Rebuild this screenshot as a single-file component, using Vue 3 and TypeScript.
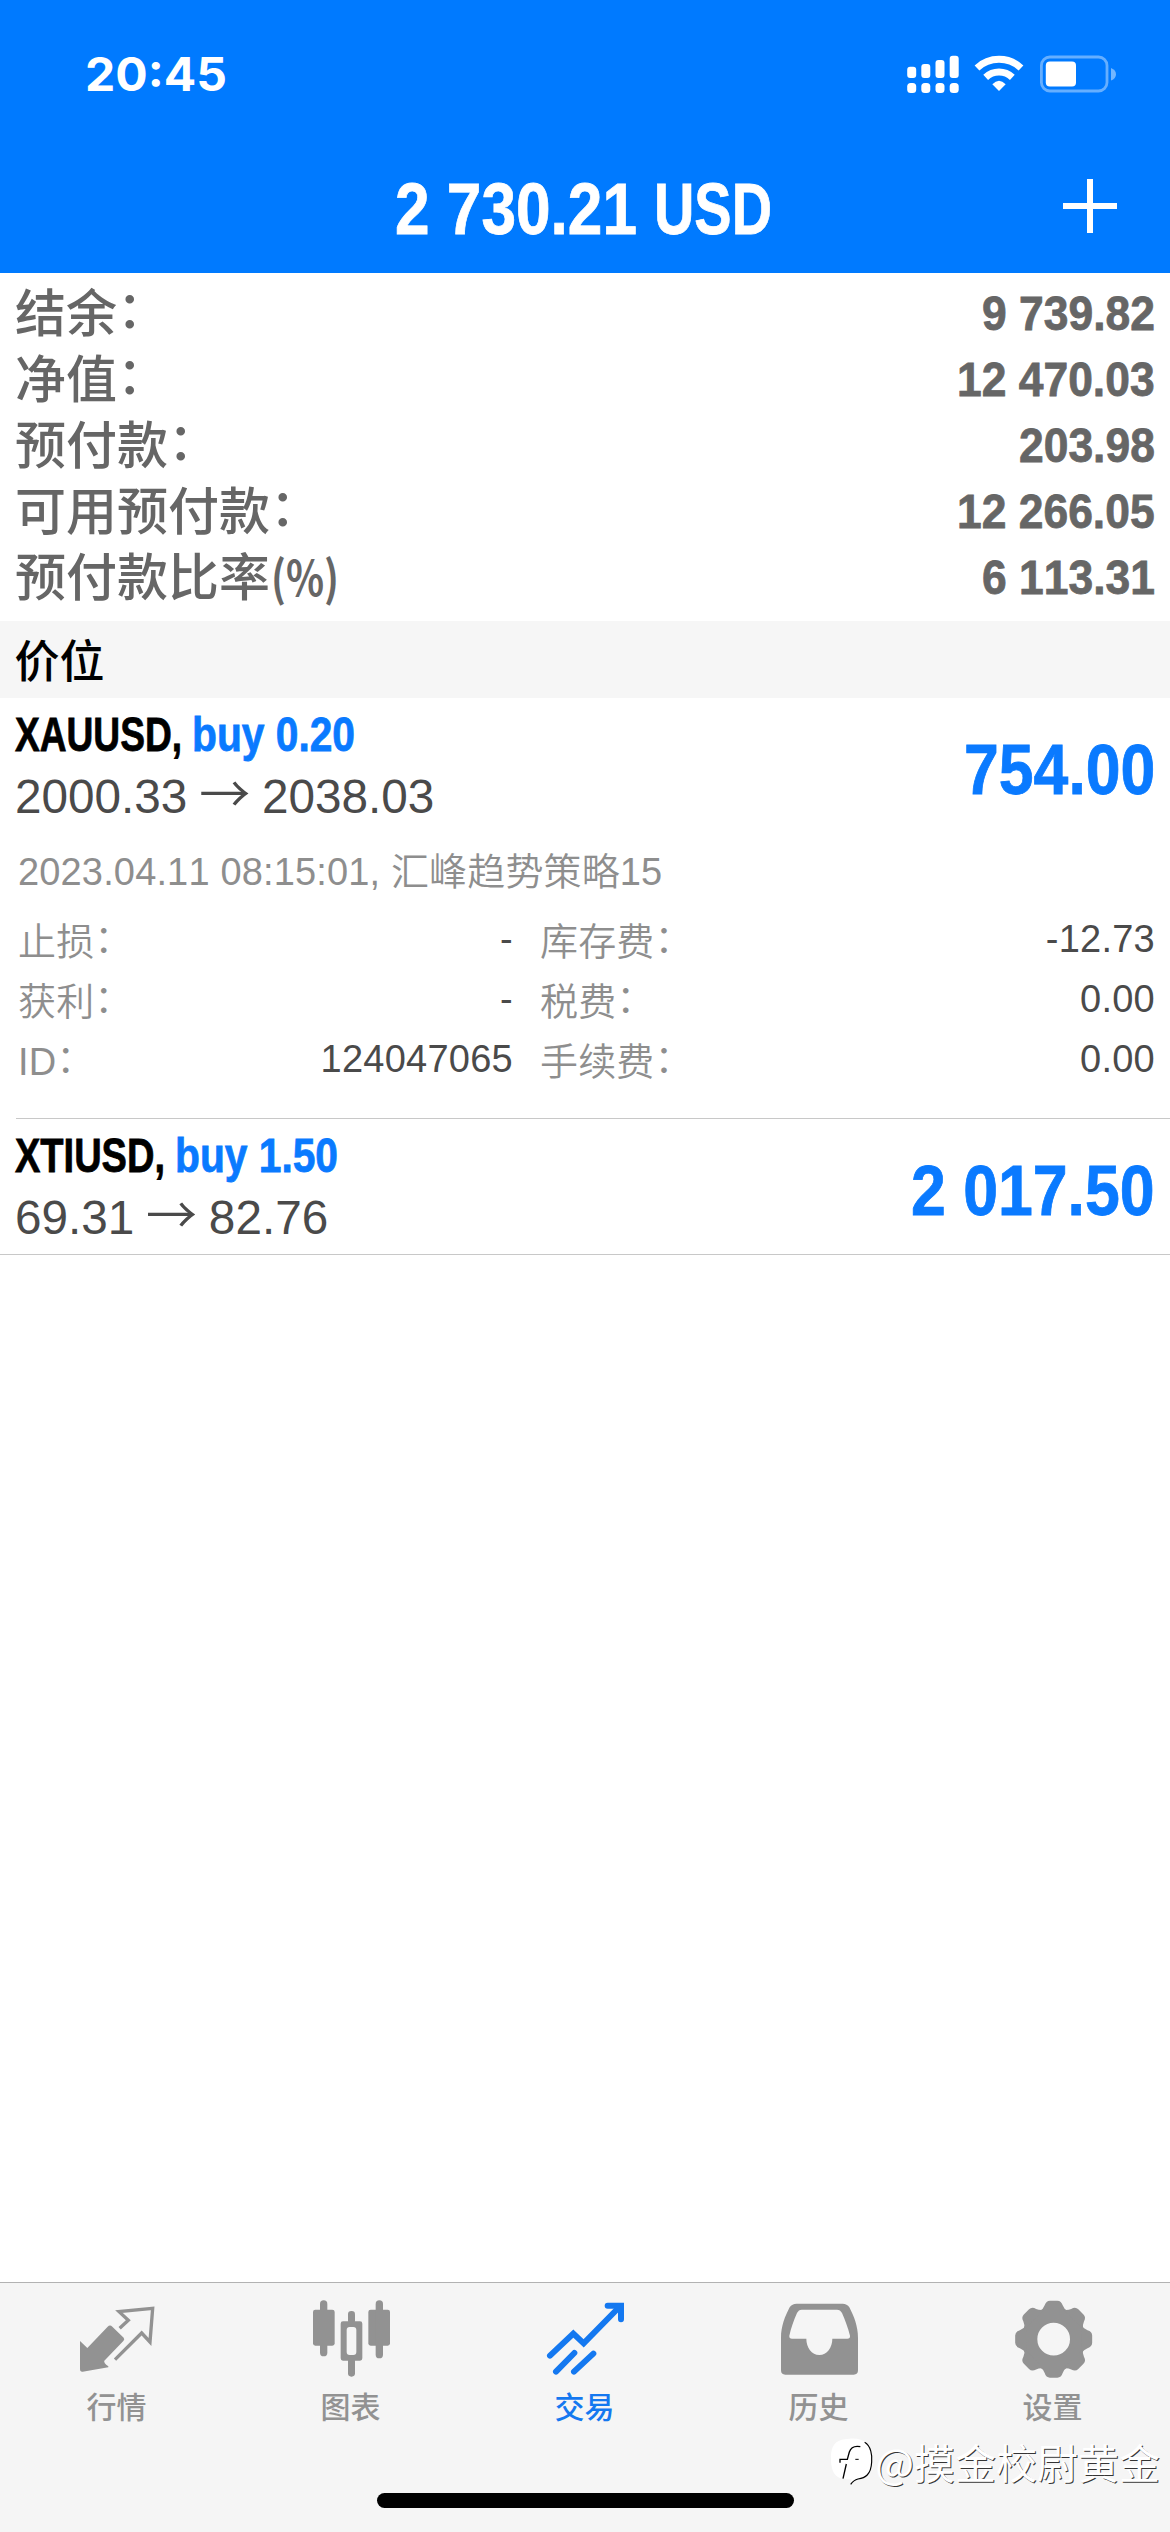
<script setup lang="ts">
import { h, type FunctionalComponent, type VNode } from 'vue'

interface FitProps {
  text: string
  width: number
  size: number
}

/* Squeezes the inner span horizontally until it takes the wanted advance width. */
const squeeze = (vnode: VNode): void => {
  const el = vnode.el as HTMLElement
  const target = Number(el.dataset.width)
  el.style.transform = `scaleX(${target / el.getBoundingClientRect().width})`
}

/* Single line of text set to an exact advance width (condensed numerals and tickers). */
const FitText: FunctionalComponent<FitProps> = (p) =>
  h('span', { class: 'fit', style: { width: `${p.width}px`, fontSize: `${p.size}px` } }, [
    h('span', { class: 'fit-line', 'data-width': p.width, onVnodeMounted: squeeze }, p.text),
  ])
FitText.props = ['text', 'width', 'size']

/* Digits share one advance; spaces and points take half of it. */
const numWidth = (text: string, digit: number): number =>
  [...text].reduce((sum, c) => sum + (/\d/.test(c) ? digit : digit / 2), 0)

const summary = [
  { label: '结余', colon: true, value: '9 739.82' },
  { label: '净值', colon: true, value: '12 470.03' },
  { label: '预付款', colon: true, value: '203.98' },
  { label: '可用预付款', colon: true, value: '12 266.05' },
  { label: '预付款比率', colon: false, value: '6 113.31' },
]

const details = [
  { left: '止损', leftValue: '-', right: '库存费', rightValue: '-12.73' },
  { left: '获利', leftValue: '-', right: '税费', rightValue: '0.00' },
  { left: 'ID', leftValue: '124047065', right: '手续费', rightValue: '0.00' },
]

const positions = [
  { symbol: 'XAUUSD,', symbolWidth: 167, side: 'buy 0.20', sideWidth: 163, open: '2000.33', now: '2038.03', profit: '754.00', expanded: true },
  { symbol: 'XTIUSD,', symbolWidth: 150, side: 'buy 1.50', sideWidth: 163, open: '69.31', now: '82.76', profit: '2 017.50', expanded: false },
]

const teeth = [0, 45, 90, 135, 180, 225, 270, 315]
</script>

<template>
  <div class="screen">
    <header class="header">
      <div class="status">
        <FitText class="time" text="20:45" :width="142" :size="46" />
        <div class="status-icons">
          <svg class="signal" width="52" height="38" viewBox="906.5 55 52 38" fill="#fff">
            <rect x="906.7" y="66.7" width="9" height="11.3" rx="3" />
            <rect x="920.8" y="64" width="9" height="14" rx="3" />
            <rect x="935" y="60" width="9" height="18" rx="3" />
            <rect x="949.2" y="55.7" width="9" height="22.3" rx="3" />
            <rect x="906.7" y="82.9" width="9" height="10" rx="3.5" />
            <rect x="920.8" y="82.9" width="9" height="10" rx="3.5" />
            <rect x="935" y="82.9" width="9" height="10" rx="3.5" />
            <rect x="949.2" y="82.9" width="9" height="10" rx="3.5" />
          </svg>
          <svg class="wifi" width="50" height="38" viewBox="282 45 150 114" fill="none" stroke="#fff" stroke-width="21">
            <path d="M291 84 A97 97 0 0 1 423 84" />
            <path d="M317 112 A59 59 0 0 1 397 112" />
            <path d="M357 153 L337 133 Q357 112 377 133 Z" fill="#fff" stroke="none" />
          </svg>
          <svg class="battery" width="78" height="38" viewBox="1039 55 78 38">
            <rect x="1041.4" y="57" width="65.6" height="34" rx="8.5" fill="none" stroke="#fff" stroke-opacity=".4" stroke-width="2.8" />
            <rect x="1045.8" y="61.6" width="30.2" height="24.8" rx="4" fill="#fff" />
            <path d="M1111 68 Q1116 70 1116 74.3 Q1116 78.600 1111 80.600 Z" fill="#fff" fill-opacity=".45" />
          </svg>
        </div>
      </div>
      <div class="navbar">
        <h1 class="title">
          <FitText text="2 730.21" :width="242" :size="71.5" />
          <FitText text="USD" :width="118" :size="71.5" />
        </h1>
        <svg class="plus" width="54" height="54" viewBox="0 0 54 54" stroke="#fff" stroke-width="6">
          <path d="M27 0 V54 M0 27 H54" />
        </svg>
      </div>
    </header>

    <section class="summary">
      <div v-for="row in summary" :key="row.label" class="summary-row">
        <span class="summary-label">{{ row.label }}<i v-if="row.colon" class="colon">：</i><FitText v-else class="unit" text="(%)" :width="68" :size="48" /></span>
        <FitText class="amount" :text="row.value" :width="numWidth(row.value, 24.7)" :size="49" />
      </div>
    </section>

    <div class="section-head">价位</div>

    <section class="positions">
      <article v-for="p in positions" :key="p.symbol" class="position">
        <div class="position-main">
          <div class="position-info">
            <div class="ticker">
              <FitText class="symbol" :text="p.symbol" :width="p.symbolWidth" :size="48" />
              <FitText class="side" :text="p.side" :width="p.sideWidth" :size="48" />
            </div>
            <div class="prices">{{ p.open }} <span class="arrow">→</span> {{ p.now }}</div>
          </div>
          <FitText class="profit" :text="p.profit" :width="numWidth(p.profit, 34.8)" :size="71" />
        </div>
        <div v-if="p.expanded" class="details">
          <div class="comment">2023.04.11 08:15:01, 汇峰趋势策略15</div>
          <div v-for="d in details" :key="d.left" class="detail-row">
            <span class="cell cell-left"><span>{{ d.left }}<i class="colon">：</i></span><b>{{ d.leftValue }}</b></span>
            <span class="cell cell-right"><span>{{ d.right }}<i class="colon">：</i></span><b>{{ d.rightValue }}</b></span>
          </div>
        </div>
      </article>
    </section>

    <nav class="tabbar">
      <div class="tabs">
        <div class="tab">
          <svg width="80" height="80" viewBox="231 88 240 240">
            <path d="M240 214 L262 235 L323 171 Q330 164 337 171 L371 204 Q375 209 370 214 L313 273 Q310 279 325 290 L325 293 L248 306 Q240 307 240 298 Z" fill="currentColor" />
            <path d="M359 176 L385 152 L357 126 L458 116 L450 217 L425 190 L345 270" fill="none" stroke="currentColor" stroke-width="10" />
          </svg>
          <span>行情</span>
        </div>
        <div class="tab">
          <svg width="80" height="80" viewBox="933 88 240 240" fill="currentColor">
            <rect x="939" y="120" width="65" height="108" rx="7" />
            <rect x="960" y="92" width="22" height="168" rx="11" />
            <rect x="1105" y="120" width="65" height="108" rx="7" />
            <rect x="1127" y="92" width="22" height="174" rx="11" />
            <rect x="1044" y="124" width="21" height="40" rx="10" />
            <rect x="1044" y="262" width="21" height="59" rx="10" />
            <path fill-rule="evenodd" d="M1029 155 H1080 Q1087 155 1087 162 V266 Q1087 273 1080 273 H1029 Q1022 273 1022 266 V162 Q1022 155 1029 155 Z M1049 172 Q1040 172 1040 181 V247 Q1040 256 1049 256 H1060 Q1069 256 1069 247 V181 Q1069 172 1060 172 Z" />
          </svg>
          <span>图表</span>
        </div>
        <div class="tab active">
          <svg width="80" height="80" viewBox="285 88 240 240" fill="none" stroke="currentColor" stroke-width="18" stroke-linecap="round">
            <path d="M300 258 L370 192 L401 221 L508 112" />
            <path d="M473 108 H513 V149" />
            <path d="M318 306 L373 250 M372 306 L430 252" />
          </svg>
          <span>交易</span>
        </div>
        <div class="tab">
          <svg width="80" height="80" viewBox="987 88 240 240" fill="currentColor">
            <path fill-rule="evenodd" d="M1040 102 H1178 Q1191 102 1198 113 C1212 140 1224 170 1224 205 V302 Q1224 315 1211 315 H1006 Q993 315 993 302 V205 C993 170 1005 140 1019 113 Q1026 102 1040 102 Z M1055 120 Q1046 120 1041 130 C1032 150 1023 175 1018 198 Q1017 207 1026 207 H1069 C1069 234 1085 256 1108 256 S1147 234 1147 207 H1192 Q1201 207 1200 198 C1194 175 1185 150 1176 130 Q1171 120 1161 120 Z" />
          </svg>
          <span>历史</span>
        </div>
        <div class="tab">
          <svg width="80" height="80" viewBox="639 88 240 240" fill="currentColor">
            <circle cx="761" cy="208.500" r="72" fill="none" stroke="currentColor" stroke-width="46" />
            <path v-for="a in teeth" :key="a" :transform="`rotate(${a} 761 208.5)`" d="M719 126 Q730 118 734 107 Q738 93 750 93 H772 Q784 93 788 107 Q792 118 803 126 Z" />
          </svg>
          <span>设置</span>
        </div>
      </div>
      <div class="home-indicator"></div>
    </nav>

    <div class="watermark">
      <svg width="46" height="50" viewBox="70 522 138 150">
        <path d="M134 530 C176 526 201 545 202 592 C203 640 182 649 160 651 Q148 654 138 667 Q137 659 141 652 C98 654 80 640 79 592 C78 545 96 532 134 530 Z" fill="#fff" />
        <path d="M180 541 C199 552 203 580 201 600 C199 639 181 648 160 651 Q147 654 138 667" fill="none" stroke="#000" stroke-width="3.500" />
        <path d="M167 554 Q141 549 134 570 L128 592 H106 V602 M125 606 L115 650" fill="none" stroke="#000" stroke-width="4" />
        <path d="M152 592 H162" stroke="#000" stroke-width="3" />
      </svg>
      <span>@摸金校尉黄金</span>
    </div>
  </div>
</template>

<style>
body {
  margin: 0;
  background: #fff;
}

.fit {
  display: block;
  flex: none;
  font-family: 'Liberation Sans', Arial, sans-serif;
  font-weight: 700;
  line-height: 1.15;
  white-space: pre;
  -webkit-text-stroke: 0.8px currentColor;
}

.fit-line {
  display: inline-block;
  transform-origin: 0 0;
}
</style>

<style scoped>
.screen {
  position: relative;
  display: flex;
  flex-direction: column;
  width: 1170px;
  height: 2532px;
  overflow: hidden;
  background: #fff;
  color: #4a4a4a;
  font-family: 'Liberation Sans', 'Noto Sans CJK SC', sans-serif;
  font-kerning: none;
}

.header {
  flex: none;
  height: 273px;
  background: #007aff;
  color: #fff;
}

.status {
  display: flex;
  align-items: flex-start;
  justify-content: space-between;
  height: 138px;
  padding: 48px 53px 0 85px;
  box-sizing: border-box;
}

.fit.time {
  font-family: Inter, sans-serif;
  -webkit-text-stroke: 0;
}

.status-icons {
  display: flex;
  padding-top: 7px;
}

.wifi {
  margin: 0 15px 0 15.5px;
}

.navbar {
  display: flex;
  align-items: center;
  justify-content: space-between;
  height: 135px;
  padding: 0 53px 0 395px;
}

.title {
  display: flex;
  align-self: flex-start;
  gap: 17px;
  margin: 0;
  padding-top: 30px;
}

.summary {
  flex: none;
  height: 348px;
  padding: 5px 15px 0;
  box-sizing: border-box;
  color: #666;
}

.summary-row {
  display: flex;
  align-items: center;
  justify-content: space-between;
  height: 66px;
}

.summary-label {
  height: 66px;
  margin-top: -2px;
  font: 500 51px/66px 'Noto Sans CJK SC', sans-serif;
  white-space: nowrap;
}

.amount {
  margin-top: 5px;
}

.fit.unit {
  display: inline-block;
  margin-left: 1px;
  font-family: 'Noto Sans CJK SC', sans-serif;
  font-weight: 600;
  line-height: 1;
  -webkit-text-stroke: 0;
}

.colon {
  position: relative;
  top: -0.08em;
  font-style: normal;
  font-family: 'Noto Sans CJK SC', sans-serif;
}

.section-head {
  flex: none;
  height: 75px;
  padding: 0 0 2px 14.500px;
  background: #f6f6f6;
  color: #000;
  font: 500 45px/75px 'Noto Sans CJK SC', sans-serif;
}

.positions {
  flex: 1;
}

.position + .position {
  border-bottom: 1px solid #c8c8c8;
}

.position:first-child::after {
  content: '';
  display: block;
  height: 1px;
  margin-left: 16px;
  background: #c8c8c8;
}

.position-main {
  display: flex;
  align-items: flex-start;
  justify-content: space-between;
  height: 135px;
  padding: 0 15px;
  box-sizing: border-box;
}

.position-info {
  padding-top: 8.500px;
}

.ticker {
  display: flex;
  gap: 10px;
  height: 59.500px;
}

.symbol {
  color: #000;
}

.side,
.profit {
  color: #0a7aff;
}

.profit {
  margin-top: 31px;
}

.prices {
  font-size: 47.700px;
  line-height: 54px;
}

.arrow {
  margin: 0 -1.500px;
  font-family: 'Noto Sans CJK SC', sans-serif;
  font-size: 51px;
  font-weight: 350;
  line-height: 1;
}

.details {
  height: 285px;
  padding: 8px 15px 0 18px;
  box-sizing: border-box;
  color: #8e8e8e;
  font-size: 38px;
  font-weight: 350;
  letter-spacing: 0.15px;
}

.comment {
  height: 67px;
  padding-top: 1px;
  line-height: 60px;
}

.detail-row {
  display: flex;
  height: 60px;
  line-height: 60px;
}

.cell {
  display: flex;
  justify-content: space-between;
}

.cell b {
  color: #4a4a4a;
  font-weight: 400;
  letter-spacing: 0.25px;
}

.cell-left {
  width: 495px;
  margin-right: 27px;
}

.cell-right {
  flex: 1;
}

.tabbar {
  flex: none;
  height: 250px;
  border-top: 1px solid #b2b2b2;
  box-sizing: border-box;
  background: #f5f5f5;
}

.tabs {
  display: flex;
  height: 210px;
}

.tab {
  display: flex;
  flex: 1;
  flex-direction: column;
  align-items: center;
  padding-top: 16px;
  color: #929292;
  font: 500 30px/40px 'Noto Sans CJK SC', sans-serif;
}

.tab span {
  margin: 6px 1px 0 0;
}

.tab.active {
  color: #1478f0;
}

.home-indicator {
  width: 417px;
  height: 15px;
  margin: 0 auto;
  border-radius: 8px;
  background: #000;
}

.watermark {
  position: absolute;
  right: 10px;
  bottom: 43px;
  display: flex;
  gap: 1px;
  align-items: center;
  color: #fff;
  font: 400 41px/56px 'Noto Sans CJK SC', sans-serif;
  text-shadow: 1px 1px 0 rgba(0, 0, 0, 0.8);
}
</style>
